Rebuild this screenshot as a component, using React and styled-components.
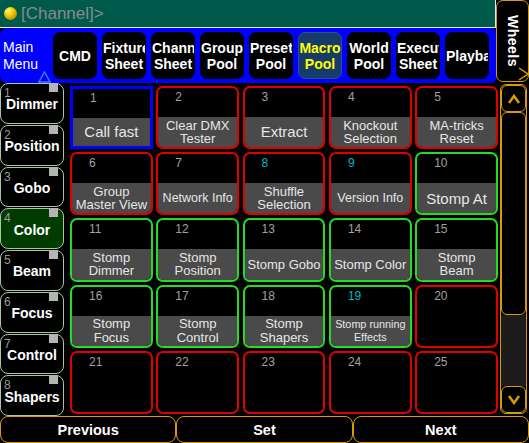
import React from 'react';
import styled, {createGlobalStyle} from "styled-components";

const ORANGE = "#d99b00";
const RED = "#e00000";
const GREEN = "#22dd22";

const topButtons = [
    {label: "CMD"},
    {label: "Fixture\nSheet"},
    {label: "Channel\nSheet"},
    {label: "Group\nPool"},
    {label: "Preset\nPool"},
    {label: "Macro\nPool", active: true},
    {label: "World\nPool"},
    {label: "Executor\nSheet"},
    {label: "Playback"},
];

const presetTypes = ["Dimmer", "Position", "Gobo", "Color", "Beam", "Focus", "Control", "Shapers"];

const macros = [
    {id: 1, label: "Call fast", frame: "blue", size: 15},
    {id: 2, label: "Clear DMX\nTester", frame: "red"},
    {id: 3, label: "Extract", frame: "red", size: 15},
    {id: 4, label: "Knockout\nSelection", frame: "red"},
    {id: 5, label: "MA-tricks\nReset", frame: "red"},
    {id: 6, label: "Group\nMaster View", frame: "red"},
    {id: 7, label: "Network Info", frame: "red", size: 12.5},
    {id: 8, label: "Shuffle\nSelection", frame: "red", running: true},
    {id: 9, label: "Version Info", frame: "red", size: 12.5, running: true},
    {id: 10, label: "Stomp At", frame: "green", size: 15},
    {id: 11, label: "Stomp\nDimmer", frame: "green"},
    {id: 12, label: "Stomp\nPosition", frame: "green"},
    {id: 13, label: "Stomp Gobo", frame: "green"},
    {id: 14, label: "Stomp Color", frame: "green"},
    {id: 15, label: "Stomp\nBeam", frame: "green"},
    {id: 16, label: "Stomp\nFocus", frame: "green"},
    {id: 17, label: "Stomp\nControl", frame: "green"},
    {id: 18, label: "Stomp\nShapers", frame: "green"},
    {id: 19, label: "Stomp running\nEffects", frame: "green", size: 10.8, running: true},
    {id: 20, frame: "red"},
    {id: 21, frame: "red"},
    {id: 22, frame: "red"},
    {id: 23, frame: "red"},
    {id: 24, frame: "red"},
    {id: 25, frame: "red"},
];

const App = () => {
    return (
        <>
            <GlobalStyle/>
            <Screen>
                <Header>
                    <HeaderMain>
                        <CommandLine>
                            <Ball/>
                            <Prompt>[Channel]&gt;</Prompt>
                        </CommandLine>
                        <MenuBar>
                            <MainMenu>
                                Main<br/>Menu
                                <MenuArrow width="13" height="12" viewBox="0 0 13 12">
                                    <path d="M6.5 1 L12 11 L1 11 Z" fill="none" stroke="#3c7cff" strokeWidth="1.5"/>
                                </MenuArrow>
                            </MainMenu>
                            {topButtons.map((b) => (
                                <PoolButton key={b.label} $active={b.active}>
                                    {b.label.split("\n").map((line) => <ButtonLine key={line}>{line}</ButtonLine>)}
                                </PoolButton>
                            ))}
                        </MenuBar>
                    </HeaderMain>
                    <WheelsButton>
                        <WheelsText>Wheels</WheelsText>
                        <WheelsArrow width="11" height="14" viewBox="0 0 11 14">
                            <path d="M1 1 L10 7 L1 13" fill="none" stroke={ORANGE} strokeWidth="1.5"/>
                        </WheelsArrow>
                    </WheelsButton>
                </Header>

                <Body>
                    <Sidebar>
                        {presetTypes.map((name, i) => (
                            <PresetButton key={name} $selected={name === "Color"}>
                                <PresetNumber>{i + 1}</PresetNumber>
                                <PresetMark/>
                                <PresetName>{name}</PresetName>
                            </PresetButton>
                        ))}
                    </Sidebar>

                    <MacroGrid>
                        {macros.map((m) => (
                            <MacroCell key={m.id} $frame={m.frame}>
                                <MacroNumber $running={m.running}>{m.id}</MacroNumber>
                                {m.label && <MacroLabel $size={m.size}>{m.label}</MacroLabel>}
                            </MacroCell>
                        ))}
                    </MacroGrid>

                    <ScrollBar>
                        <ScrollButton>
                            <svg width="14" height="10" viewBox="0 0 14 10">
                                <path d="M2 9 L7 2 L12 9" fill="none" stroke={ORANGE} strokeWidth="2.5"/>
                            </svg>
                        </ScrollButton>
                        <ScrollThumb/>
                        <ScrollTrack/>
                        <ScrollButton>
                            <svg width="14" height="10" viewBox="0 0 14 10">
                                <path d="M2 1 L7 8 L12 1" fill="none" stroke={ORANGE} strokeWidth="2.5"/>
                            </svg>
                        </ScrollButton>
                    </ScrollBar>
                </Body>

                <Footer>
                    <FooterButton>Previous</FooterButton>
                    <FooterButton>Set</FooterButton>
                    <FooterButton>Next</FooterButton>
                </Footer>
            </Screen>
        </>
    );
};

export default App;

const GlobalStyle = createGlobalStyle`
    html, body {
        margin: 0;
        padding: 0;
        background: #000;
    }

    * {
        box-sizing: border-box;
    }
`;

const Screen = styled.div`
    width: 529px;
    height: 443px;
    background: #000;
    display: flex;
    flex-direction: column;
    font-family: "Liberation Sans", Arial, sans-serif;
    overflow: hidden;
`;

const Header = styled.div`
    display: flex;
    height: 83px;
`;

const HeaderMain = styled.div`
    width: 497px;
    display: flex;
    flex-direction: column;
`;

const CommandLine = styled.div`
    height: 28px;
    background: #005a4c;
    border-bottom: 1px solid #e8e8e8;
    border-right: 1px solid #e8e8e8;
    width: 496px;
    display: flex;
    align-items: center;
    gap: 4px;
    padding-left: 4px;
`;

const Ball = styled.div`
    width: 13px;
    height: 13px;
    border-radius: 50%;
    background: radial-gradient(circle at 35% 30%, #fff59a 0%, #f2d000 35%, #b08a00 80%, #6a5200 100%);
`;

const Prompt = styled.span`
    color: #8a8a8a;
    font-size: 17px;
`;

const MenuBar = styled.div`
    flex: 1;
    background: #0000ff;
    border-radius: 7px;
    display: flex;
    align-items: center;
    gap: 5px;
    padding: 3px 6px 3px 3px;
`;

const MainMenu = styled.div`
    position: relative;
    width: 45px;
    height: 100%;
    color: #fff;
    font-size: 14px;
    line-height: 17px;
    padding-top: 8px;
`;

const MenuArrow = styled.svg`
    position: absolute;
    left: 35px;
    bottom: -3px;
`;

const PoolButton = styled.div`
    width: 44px;
    height: 47px;
    flex: none;
    border-radius: 7px;
    background: ${({$active}) => $active ? "#163a6a" : "#000"};
    border: 1px solid ${({$active}) => $active ? "#2a4f8f" : "#000"};
    color: ${({$active}) => $active ? "#ffff00" : "#fff"};
    font-weight: bold;
    font-size: 14px;
    line-height: 16px;
    display: flex;
    flex-direction: column;
    justify-content: center;
    overflow: hidden;
`;

const ButtonLine = styled.div`
    text-align: center;
    white-space: nowrap;
    overflow: hidden;
`;

const WheelsButton = styled.div`
    position: relative;
    width: 33px;
    height: 82px;
    margin-left: -1px;
    border: 1.5px solid ${ORANGE};
    border-radius: 7px;
    background: #000;
    display: flex;
    justify-content: center;
    padding-top: 14px;
`;

const WheelsText = styled.div`
    writing-mode: vertical-rl;
    color: #fff;
    font-weight: bold;
    font-size: 14px;
    letter-spacing: 0.5px;
`;

const WheelsArrow = styled.svg`
    position: absolute;
    right: -1px;
    bottom: 0;
`;

const Body = styled.div`
    height: 333px;
    display: flex;
`;

const Sidebar = styled.div`
    width: 64px;
    display: flex;
    flex-direction: column;
    gap: 1px;
    margin-right: 6px;
`;

const PresetButton = styled.div`
    position: relative;
    flex: 1;
    border: 1.5px solid #a9c6a2;
    border-radius: 8px;
    background: ${({$selected}) => $selected ? "#003c00" : "#000"};
    display: flex;
    align-items: center;
    justify-content: center;
    padding-top: 2px;
`;

const PresetNumber = styled.span`
    position: absolute;
    left: 3px;
    top: 2px;
    color: #9a9a9a;
    font-size: 12px;
`;

const PresetMark = styled.span`
    position: absolute;
    right: 5px;
    top: -1px;
    width: 9px;
    height: 9px;
    background: #b4b4b4;
`;

const PresetName = styled.span`
    color: #fff;
    font-weight: bold;
    font-size: 14px;
`;

const MacroGrid = styled.div`
    width: 428px;
    padding: 3px 0 2px;
    display: grid;
    grid-template-columns: repeat(5, 1fr);
    grid-template-rows: repeat(5, 1fr);
    gap: 3px 3.5px;
`;

const frameColor = {red: RED, green: GREEN, blue: "#0000ff"};

const MacroCell = styled.div`
    display: flex;
    flex-direction: column;
    border: ${({$frame}) => $frame === "blue" ? 3 : 2}px solid ${({$frame}) => frameColor[$frame]};
    border-radius: ${({$frame}) => $frame === "blue" ? 0 : 7}px;
    background: #000;
    overflow: hidden;
`;

const MacroNumber = styled.div`
    height: 29px;
    flex: none;
    padding: 2px 0 0 17px;
    font-size: 12px;
    color: ${({$running}) => $running ? "#00b8c0" : "#a0a0a0"};
`;

const MacroLabel = styled.div`
    flex: 1;
    background: #4a4a4a;
    color: #e6e6e6;
    font-size: ${({$size}) => $size || 13}px;
    line-height: ${({$size}) => $size && $size < 12 ? 12.5 : 13.5}px;
    white-space: pre-line;
    text-align: center;
    display: flex;
    align-items: center;
    justify-content: center;
`;

const ScrollBar = styled.div`
    width: 27px;
    margin: 1px 0 2px 2px;
    border: 1.5px solid ${ORANGE};
    border-radius: 6px;
    display: flex;
    flex-direction: column;
    overflow: hidden;
`;

const ScrollButton = styled.div`
    height: 27px;
    flex: none;
    border: 1.5px solid ${ORANGE};
    border-radius: 6px;
    background: #000;
    display: flex;
    align-items: center;
    justify-content: center;
`;

const ScrollThumb = styled.div`
    height: 203px;
    flex: none;
    border: 1.5px solid ${ORANGE};
    border-radius: 6px;
    background: #000;
`;

const ScrollTrack = styled.div`
    flex: 1;
    background: #1c1c1c;
`;

const Footer = styled.div`
    height: 27px;
    display: flex;
`;

const FooterButton = styled.div`
    flex: 1;
    border: 1.5px solid ${ORANGE};
    border-radius: 8px;
    background: #000;
    color: #fff;
    font-weight: bold;
    font-size: 14.5px;
    display: flex;
    align-items: center;
    justify-content: center;
`;
